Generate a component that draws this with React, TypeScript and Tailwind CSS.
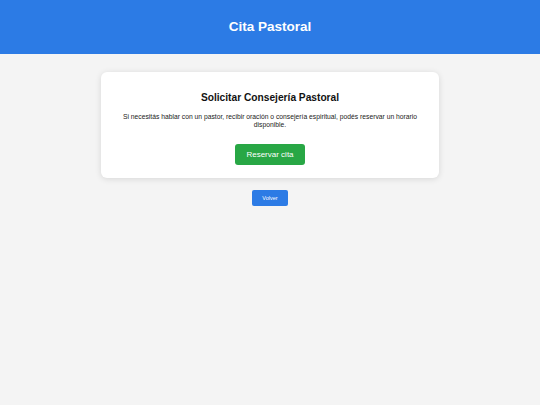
export default function App() {
    return (
        <div className="min-h-[405px] bg-[#f4f4f4] font-['Liberation_Sans',Arial,sans-serif]">
            <header className="flex h-[54px] items-center justify-center bg-[#2c7be5]">
                <h1 className="text-[13.5px] font-bold text-white">Cita Pastoral</h1>
            </header>

            <main className="flex flex-col items-center pt-[18px]">
                <section className="w-[338px] rounded-[6px] bg-white px-[18px] pb-[13px] pt-[20px] text-center shadow-[0_1px_6px_rgba(0,0,0,0.12)]">
                    <h2 className="text-[10.2px] font-bold leading-[12px] text-[#111]">Solicitar Consejería Pastoral</h2>
                    <p className="mt-[9px] text-[6.75px] leading-[8px] text-[#222]">
                        Si necesitás hablar con un pastor, recibir oración o consejería espiritual, podés reservar un horario disponible.
                    </p>
                    <button
                        type="button"
                        className="mt-[15px] h-[21px] w-[70px] rounded-[3px] bg-[#28a745] text-[8px] text-white"
                    >
                        Reservar cita
                    </button>
                </section>

                <button
                    type="button"
                    className="mt-[12px] h-[16px] w-[36px] rounded-[2px] bg-[#2c7be5] text-[5.5px] text-white"
                >
                    Volver
                </button>
            </main>
        </div>
    );
}
